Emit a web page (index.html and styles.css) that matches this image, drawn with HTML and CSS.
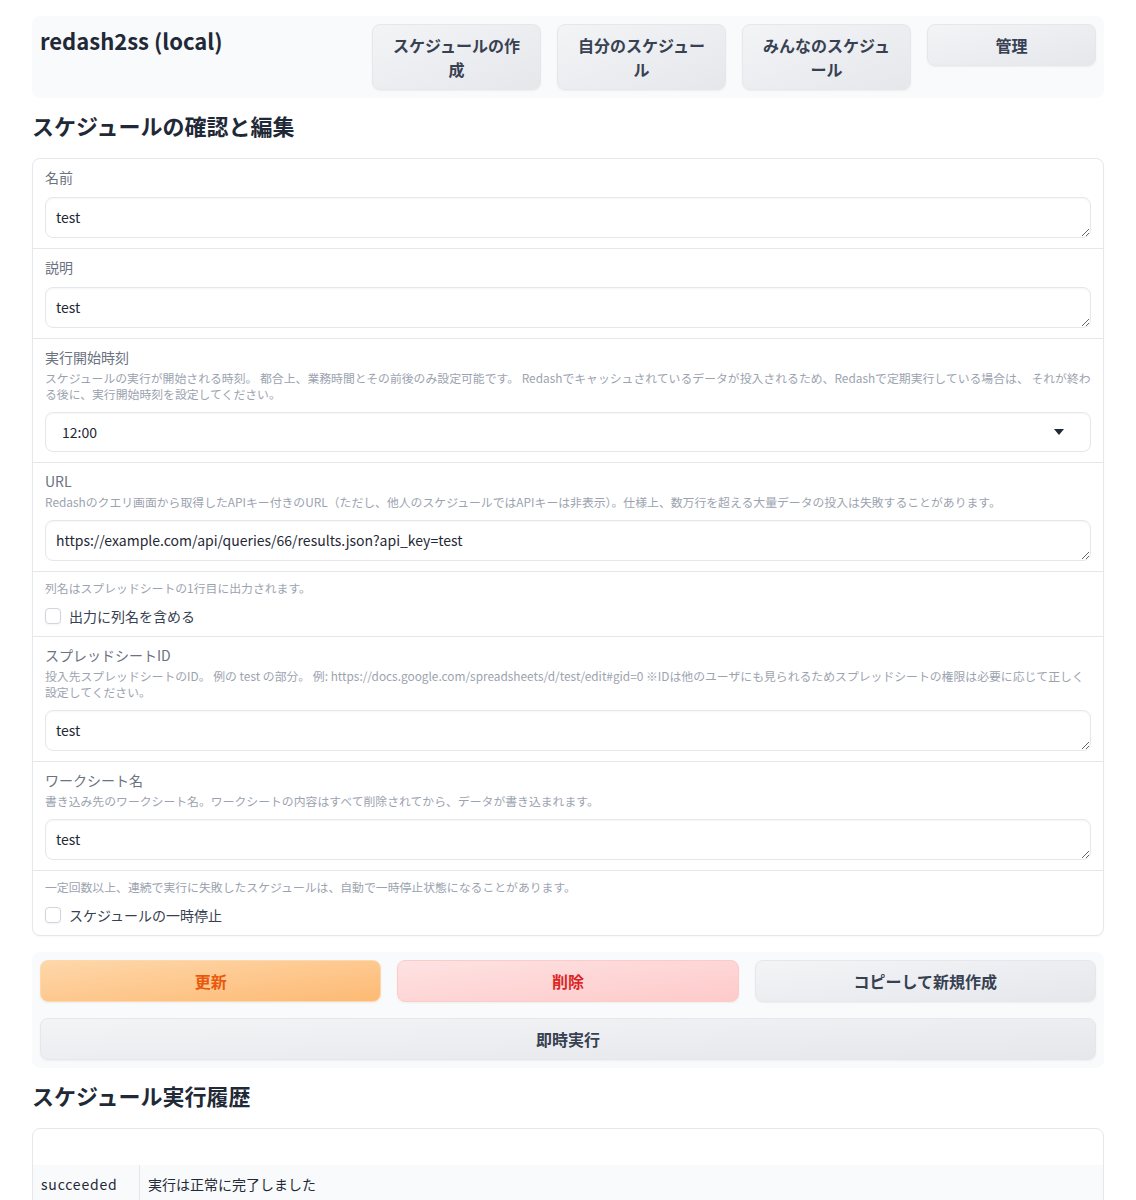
FILE: index.html
```html
<!doctype html>
<html>
<head>
	<meta charset="utf-8">
	<title>redash2ss (local)</title>
	<link rel="stylesheet" href="styles.css">
</head>
<body>
	<div class="app">
		<div class="header">
			<div class="title">redash2ss (local)</div>
			<button class="btn btn-secondary">スケジュールの作成</button>
			<button class="btn btn-secondary">自分のスケジュール</button>
			<button class="btn btn-secondary">みんなのスケジュール</button>
			<button class="btn btn-secondary">管理</button>
		</div>

		<h2 class="heading">スケジュールの確認と編集</h2>

		<div class="form">
			<div class="field">
				<div class="field-head">
					<span class="field-label">名前</span>
				</div>
				<textarea class="input" rows="1">test</textarea>
			</div>
			<div class="field">
				<div class="field-head">
					<span class="field-label">説明</span>
				</div>
				<textarea class="input" rows="1">test</textarea>
			</div>
			<div class="field">
				<div class="field-head">
					<span class="field-label">実行開始時刻</span>
					<span class="field-info">スケジュールの実行が開始される時刻。 都合上、業務時間とその前後のみ設定可能です。 Redashでキャッシュされているデータが投入されるため、Redashで定期実行している場合は、 それが終わる後に、実行開始時刻を設定してください。</span>
				</div>
				<div class="select">
					<span>12:00</span>
					<svg class="select-arrow" width="10" height="6" viewBox="0 0 10 6"><path d="M0 0 L10 0 L5 6 Z" fill="#1f2937"/></svg>
				</div>
			</div>
			<div class="field">
				<div class="field-head">
					<span class="field-label">URL</span>
					<span class="field-info">Redashのクエリ画面から取得したAPIキー付きのURL（ただし、他人のスケジュールではAPIキーは非表示）。仕様上、数万行を超える大量データの投入は失敗することがあります。</span>
				</div>
				<textarea class="input" rows="1">https://example.com/api/queries/66/results.json?api_key=test</textarea>
			</div>
			<div class="field">
				<div class="field-head">
					<span class="field-info">列名はスプレッドシートの1行目に出力されます。</span>
				</div>
				<label class="check">
					<input type="checkbox">
					<span>出力に列名を含める</span>
				</label>
			</div>
			<div class="field">
				<div class="field-head">
					<span class="field-label">スプレッドシートID</span>
					<span class="field-info">投入先スプレッドシートのID。 例の test の部分。 例: https://docs.google.com/spreadsheets/d/test/edit#gid=0 ※IDは他のユーザにも見られるためスプレッドシートの権限は必要に応じて正しく設定してください。</span>
				</div>
				<textarea class="input" rows="1">test</textarea>
			</div>
			<div class="field">
				<div class="field-head">
					<span class="field-label">ワークシート名</span>
					<span class="field-info">書き込み先のワークシート名。ワークシートの内容はすべて削除されてから、データが書き込まれます。</span>
				</div>
				<textarea class="input" rows="1">test</textarea>
			</div>
			<div class="field">
				<div class="field-head">
					<span class="field-info">一定回数以上、連続で実行に失敗したスケジュールは、自動で一時停止状態になることがあります。</span>
				</div>
				<label class="check">
					<input type="checkbox">
					<span>スケジュールの一時停止</span>
				</label>
			</div>
		</div>

		<div class="actions">
			<div class="actions-row">
				<button class="btn btn-primary">更新</button>
				<button class="btn btn-stop">削除</button>
				<button class="btn btn-secondary">コピーして新規作成</button>
			</div>
			<button class="btn btn-secondary">即時実行</button>
		</div>

		<h2 class="heading">スケジュール実行履歴</h2>

		<div class="history">
			<table>
				<thead>
					<tr><th class="col-status"></th><th></th></tr>
				</thead>
				<tbody>
					<tr>
						<td class="col-status">succeeded</td>
						<td>実行は正常に完了しました</td>
					</tr>
					<tr>
						<td class="col-status"></td>
						<td></td>
					</tr>
				</tbody>
			</table>
		</div>
	</div>
</body>
</html>
```

FILE: styles.css
```css
	body {
		margin: 0;
		background: #fff;
		color: #1f2937;
		font-family: "Noto Sans CJK JP", "Noto Sans", sans-serif;
		font-size: 14px;
	}
	.app {
		padding: 16px 32px;
		display: flex;
		flex-direction: column;
		gap: 16px;
	}
	.header {
		display: grid;
		grid-template-columns: 1fr repeat(4, 169px);
		gap: 16px;
		align-items: start;
		padding: 8px;
		background: #f9fafb;
		border-radius: 8px;
	}
	.title {
		font-size: 22px;
		line-height: 32px;
		font-weight: 700;
		color: #1f2937;
	}
	.btn {
		font-family: inherit;
		font-size: 16px;
		font-weight: 700;
		line-height: 24px;
		padding: 8px 16px;
		border-radius: 8px;
		border: 1px solid #e5e7eb;
		text-align: center;
		cursor: pointer;
		box-shadow: 0 1px 2px rgba(0,0,0,.05);
	}
	.btn-secondary {
		color: #374151;
		background: linear-gradient(to bottom right, #f3f4f6, #e5e7eb);
	}
	.btn-primary {
		color: #ea580c;
		border-color: #fed7aa;
		background: linear-gradient(to bottom right, #fed7aa, #fdba74);
	}
	.btn-stop {
		color: #dc2626;
		border-color: #fecaca;
		background: linear-gradient(to bottom right, #fee2e2, #fecaca);
	}
	.heading {
		margin: 0;
		padding: 1px 0 7px;
		font-size: 22px;
		line-height: 20px;
		font-weight: 700;
		color: #1f2937;
	}
	.form {
		border: 1px solid #e5e7eb;
		border-radius: 8px;
		background: #fff;
		box-shadow: 0 1px 2px rgba(0,0,0,.03);
	}
	.field {
		padding: 8px 12px 10px;
		display: flex;
		flex-direction: column;
		gap: 10px;
		border-top: 1px solid #e5e7eb;
	}
	.field:first-child {
		border-top: 0;
	}
	.field-head {
		display: flex;
		flex-direction: column;
		gap: 3px;
	}
	.field-label {
		font-size: 14px;
		line-height: 20px;
		color: #6b7280;
	}
	.field-info {
		font-size: 11.85px;
		line-height: 16px;
		color: #9ca3af;
	}
	.input {
		display: block;
		width: 100%;
		box-sizing: border-box;
		margin: 0;
		padding: 10px;
		font-family: inherit;
		font-size: 14px;
		line-height: 19px;
		color: #1f2937;
		background: #fff;
		border: 1px solid #e5e7eb;
		border-radius: 8px;
		box-shadow: inset 0 1px 2px rgba(0,0,0,.04);
		resize: vertical;
		outline: 0;
	}
	.select {
		display: flex;
		align-items: center;
		justify-content: space-between;
		height: 40px;
		box-sizing: border-box;
		padding: 0 26px 0 16px;
		font-size: 14px;
		color: #1f2937;
		border: 1px solid #e5e7eb;
		border-radius: 8px;
		box-shadow: inset 0 1px 2px rgba(0,0,0,.04);
	}
	.check {
		display: flex;
		align-items: center;
		gap: 8px;
		font-size: 14px;
		line-height: 20px;
		color: #374151;
	}
	.check input {
		-webkit-appearance: none;
		appearance: none;
		margin: 0;
		width: 16px;
		height: 16px;
		border: 1px solid #d1d5db;
		border-radius: 4px;
		background: #fff;
		box-shadow: 0 1px 2px rgba(0,0,0,.05);
	}
	.actions {
		display: flex;
		flex-direction: column;
		gap: 16px;
		padding: 8px;
		background: #f9fafb;
		border-radius: 8px;
	}
	.actions-row {
		display: grid;
		grid-template-columns: 1fr 1fr 1fr;
		gap: 16px;
	}
	.history {
		border: 1px solid #e5e7eb;
		border-radius: 8px;
		overflow: hidden;
	}
	.history table {
		width: 100%;
		border-collapse: collapse;
	}
	.history th {
		height: 36px;
		padding: 0;
	}
	.history td {
		height: 38px;
		padding: 0 8px;
		font-size: 14px;
		color: #1f2937;
		border-right: 1px solid #e5e7eb;
	}
	.history td:last-child {
		border-right: 0;
	}
	.history tbody tr:nth-child(odd) {
		background: #f9fafb;
	}
	.col-status {
		width: 90px;
		letter-spacing: 0.8px;
	}
```
